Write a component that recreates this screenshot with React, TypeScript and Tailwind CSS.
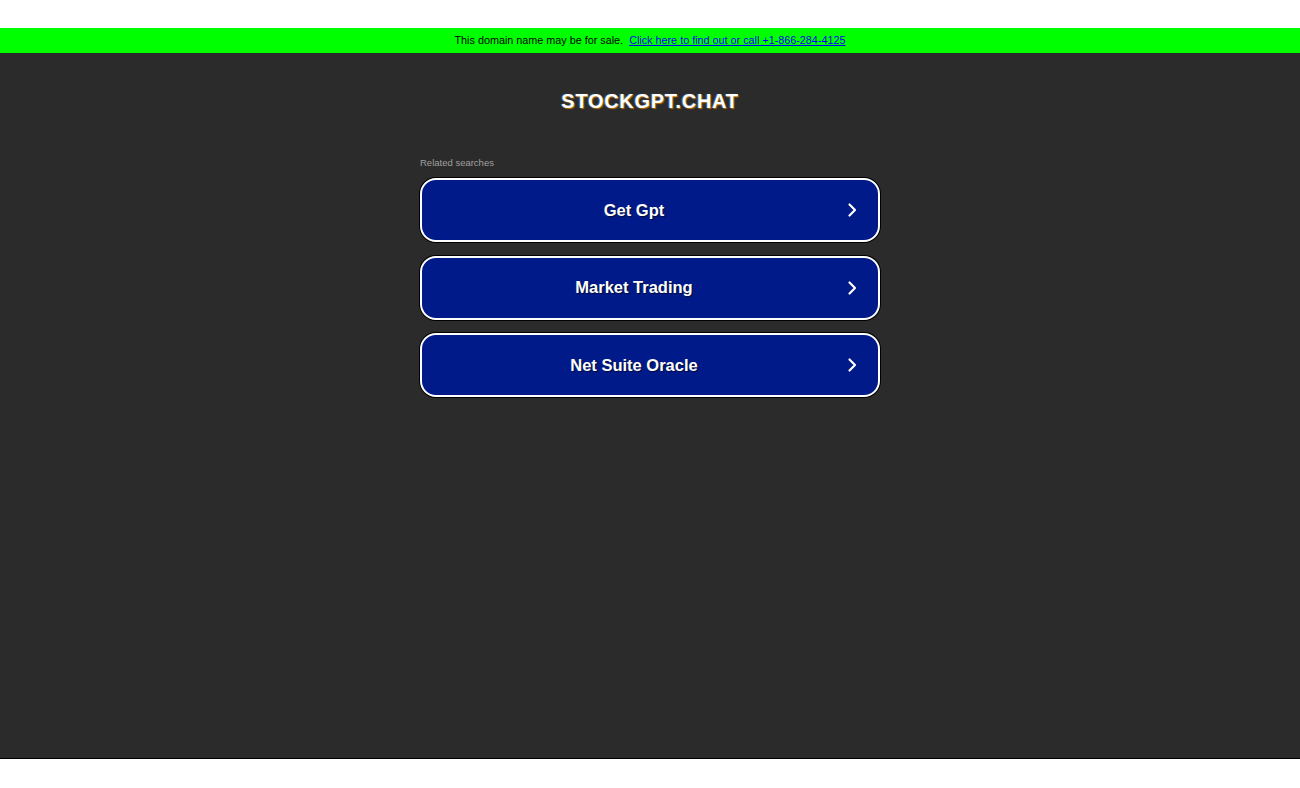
import React from "react";

const items = ["Get Gpt", "Market Trading", "Net Suite Oracle"];

function Chevron() {
  return (
    <svg width="12" height="16" viewBox="0 0 12 16" fill="none">
      <path d="M3.5 2.5 L9 8 L3.5 13.5" stroke="white" strokeWidth="2.2" strokeLinecap="round" strokeLinejoin="round" />
    </svg>
  );
}

export default function App() {
  return (
    <div className="min-h-[788px] bg-white" style={{ fontFamily: '"Liberation Sans", Arial, sans-serif' }}>
      <div className="h-[28px]" />
      <div className="h-[25px] bg-[#00ff00] flex items-center justify-center text-[10.8px] text-black">
        <span>This domain name may be for sale.</span>
        <a href="#" className="ml-[6px] text-[#0000ee] underline">Click here to find out or call +1-866-284-4125</a>
      </div>
      <div className="h-[706px] bg-[#2b2b2b] border-b border-black flex flex-col items-center">
        <h1
          className="mt-[36px] text-[20px] font-bold text-white tracking-[0.7px] leading-[24px]"
          style={{ textShadow: "1px 1px 1px #c06a00, -1px 0 1px #3a6fd8" }}
        >
          STOCKGPT.CHAT
        </h1>
        <div className="w-[460px] mt-[44px]">
          <div className="text-[9.5px] text-[#a0a0a0] leading-[12px] mb-[9px]">
            Related searches
          </div>
          <div className="flex flex-col gap-[13.5px]">
            {items.map((t) => (
              <div
                key={t}
                className="h-[64px] rounded-[16px] border-2 border-white bg-[#011a89] flex items-center pl-0 pr-[20px] shadow-[0_0_0_1px_#000]"
              >
                <span
                  className="flex-1 text-center text-[16.5px] font-bold text-white"
                  style={{ textShadow: "1px 1px 1px rgba(0,0,0,0.6)" }}
                >
                  {t}
                </span>
                <Chevron />
              </div>
            ))}
          </div>
        </div>
      </div>
    </div>
  );
}
